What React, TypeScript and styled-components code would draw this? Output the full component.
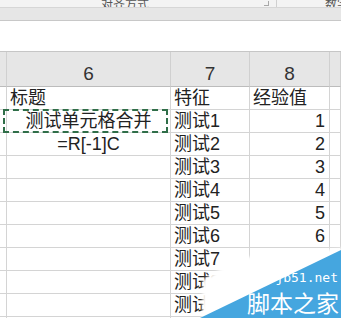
import styled, { createGlobalStyle } from 'styled-components';

const GlobalStyle = createGlobalStyle`
  html, body {
    margin: 0;
    padding: 0;
    background: #ffffff;
  }
`;

const FONT = `"Liberation Sans", "Noto Sans CJK SC", sans-serif`;

const Page = styled.div`
  position: relative;
  width: 341px;
  height: 318px;
  overflow: hidden;
  background: #ffffff;
  font-family: ${FONT};
  color: #222222;
`;

// bottom edge of the ribbon, only the group captions peek through
const Ribbon = styled.div`
  height: 7px;
  display: flex;
  align-items: flex-end;
  overflow: hidden;
  background: #f3f3f3;
  border-bottom: 1px solid #d6d6d6;
`;

const GroupLabel = styled.div<{ $width: number }>`
  width: ${(p) => p.$width}px;
  flex: none;
  text-align: center;
  font-size: 12px;
  line-height: 12px;
  margin-bottom: -4px;
  color: #555555;
`;

const GroupSep = styled.div`
  width: 1px;
  height: 7px;
  flex: none;
  background: #d0d0d0;
`;

const Launcher = styled.div`
  width: 4px;
  height: 4px;
  flex: none;
  margin: 0 7px 1px 14px;
  border-right: 1px solid #a8a8a8;
  border-bottom: 1px solid #a8a8a8;
`;

const Band = styled.div`
  height: 12px;
  background: #e6e6e6;
  border-bottom: 1px solid #c8c8c8;
`;

const FormulaArea = styled.div`
  height: 30px;
  background: #ffffff;
  border-bottom: 1px solid #c6c6c6;
`;

const Sheet = styled.div`
  display: grid;
  grid-template-columns: 7px 164px 79px 80px 1fr;
  grid-template-rows: 35px;
  grid-auto-rows: 23px;
`;

const HeadCell = styled.div`
  box-sizing: border-box;
  background: #e6e6e6;
  border-right: 1px solid #d0d0d0;
  border-bottom: 1px solid #bcbcbc;
  display: flex;
  align-items: flex-end;
  justify-content: center;
  font-size: 19px;
  line-height: 20px;
  padding-bottom: 2px;
  color: #333333;
`;

const Cell = styled.div<{ $align?: 'left' | 'center' | 'right'; $marquee?: boolean }>`
  position: relative;
  box-sizing: border-box;
  border-right: 1px solid #d4d4d4;
  border-bottom: 1px solid #d4d4d4;
  display: flex;
  align-items: flex-end;
  justify-content: ${(p) =>
    p.$align === 'right' ? 'flex-end' : p.$align === 'center' ? 'center' : 'flex-start'};
  padding: 0 ${(p) => (p.$align === 'right' ? 4 : 0)}px 1px ${(p) => (p.$align === 'left' ? 3 : 0)}px;
  font-size: 18px;
  line-height: 20px;
  white-space: nowrap;

  ${(p) =>
    p.$marquee &&
    `
    &::after {
      content: '';
      position: absolute;
      left: -4px;
      top: -1px;
      right: 2px;
      bottom: -1px;
      border: 2px dashed #2f6e48;
      pointer-events: none;
    }
  `}
`;

const Watermark = styled.div`
  position: absolute;
  left: 180px;
  top: 218px;
  width: 161px;
  height: 100px;
  pointer-events: none;
`;

const MarkDomain = styled.div`
  position: absolute;
  right: 3px;
  top: 53px;
  font-family: "DejaVu Sans Mono", monospace;
  font-size: 13px;
  line-height: 14px;
  color: #ffffff;
`;

const MarkName = styled.div`
  position: absolute;
  right: 2px;
  top: 70px;
  font-family: "Noto Sans CJK SC", sans-serif;
  font-size: 23px;
  line-height: 28px;
  color: #ffffff;
`;

type Row = { a?: string; b?: string; c?: string; marquee?: boolean; center?: boolean };

const rows: Row[] = [
  { a: '标题', b: '特征', c: '经验值' },
  { a: '测试单元格合并', b: '测试1', c: '1', marquee: true, center: true },
  { a: '=R[-1]C', b: '测试2', c: '2', center: true },
  { b: '测试3', c: '3' },
  { b: '测试4', c: '4' },
  { b: '测试5', c: '5' },
  { b: '测试6', c: '6' },
  { b: '测试7' },
  { b: '测试8' },
  { b: '测试9' },
  { b: '测试10' },
];

export default function App() {
  return (
    <Page>
      <GlobalStyle />
      <Ribbon>
        <GroupLabel $width={250}>对齐方式</GroupLabel>
        <Launcher />
        <GroupSep />
        <GroupLabel $width={120}>数字</GroupLabel>
      </Ribbon>
      <Band />
      <FormulaArea />
      <Sheet>
        <HeadCell />
        <HeadCell>6</HeadCell>
        <HeadCell>7</HeadCell>
        <HeadCell>8</HeadCell>
        <HeadCell />
        {rows.map((r, i) => (
          <>
            <Cell key={`h${i}`} />
            <Cell key={`a${i}`} $align={r.center ? 'center' : 'left'} $marquee={r.marquee}>
              {r.a}
            </Cell>
            <Cell key={`b${i}`} $align="left">
              {r.b}
            </Cell>
            <Cell key={`c${i}`} $align={r.c && /^\d+$/.test(r.c) ? 'right' : 'left'}>
              {r.c}
            </Cell>
            <Cell key={`d${i}`} />
          </>
        ))}
      </Sheet>
      <Watermark>
        <svg width="161" height="100" viewBox="0 0 161 100">
          <defs>
            <filter id="soft" x="-30%" y="-30%" width="160%" height="160%">
              <feGaussianBlur stdDeviation="1.8" />
            </filter>
          </defs>
          {/* white haze behind the corner badge */}
          <polygon
            points="22,104 23,62 58,40 165,30 165,104"
            fill="#ffffff"
            filter="url(#soft)"
          />
          <polygon points="20,100 161,32 161,100" fill="#45a6df" />
        </svg>
        <MarkDomain>jb51.net</MarkDomain>
        <MarkName>脚本之家</MarkName>
      </Watermark>
    </Page>
  );
}
